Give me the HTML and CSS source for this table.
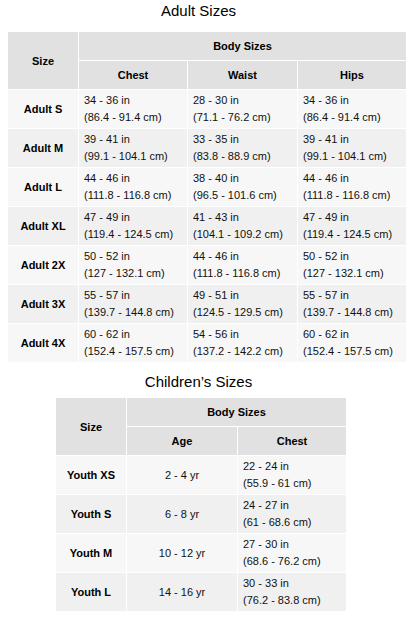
FILE: index.html
```html
<!DOCTYPE html>
<html>
<head>
<meta charset="utf-8">
<link rel="stylesheet" href="styles.css">
</head>
<body>
<div class="page">
  <h2 class="title title-adult">Adult Sizes</h2>
  <table class="sizes sizes-adult">
    <colgroup>
      <col class="c-size"><col class="c-chest"><col class="c-waist"><col class="c-hips">
    </colgroup>
    <thead>
      <tr><th rowspan="2" class="size-head">Size</th><th colspan="3" class="last">Body Sizes</th></tr>
      <tr><th>Chest</th><th>Waist</th><th class="last">Hips</th></tr>
    </thead>
    <tbody>
      <tr class="odd"><td class="size">Adult S</td><td>34 - 36 in<br>(86.4 - 91.4 cm)</td><td>28 - 30 in<br>(71.1 - 76.2 cm)</td><td class="last">34 - 36 in<br>(86.4 - 91.4 cm)</td></tr>
      <tr class="even"><td class="size">Adult M</td><td>39 - 41 in<br>(99.1 - 104.1 cm)</td><td>33 - 35 in<br>(83.8 - 88.9 cm)</td><td class="last">39 - 41 in<br>(99.1 - 104.1 cm)</td></tr>
      <tr class="odd"><td class="size">Adult L</td><td>44 - 46 in<br>(111.8 - 116.8 cm)</td><td>38 - 40 in<br>(96.5 - 101.6 cm)</td><td class="last">44 - 46 in<br>(111.8 - 116.8 cm)</td></tr>
      <tr class="even"><td class="size">Adult XL</td><td>47 - 49 in<br>(119.4 - 124.5 cm)</td><td>41 - 43 in<br>(104.1 - 109.2 cm)</td><td class="last">47 - 49 in<br>(119.4 - 124.5 cm)</td></tr>
      <tr class="odd"><td class="size">Adult 2X</td><td>50 - 52 in<br>(127 - 132.1 cm)</td><td>44 - 46 in<br>(111.8 - 116.8 cm)</td><td class="last">50 - 52 in<br>(127 - 132.1 cm)</td></tr>
      <tr class="even"><td class="size">Adult 3X</td><td>55 - 57 in<br>(139.7 - 144.8 cm)</td><td>49 - 51 in<br>(124.5 - 129.5 cm)</td><td class="last">55 - 57 in<br>(139.7 - 144.8 cm)</td></tr>
      <tr class="odd"><td class="size">Adult 4X</td><td>60 - 62 in<br>(152.4 - 157.5 cm)</td><td>54 - 56 in<br>(137.2 - 142.2 cm)</td><td class="last">60 - 62 in<br>(152.4 - 157.5 cm)</td></tr>
    </tbody>
  </table>

  <h2 class="title title-kids">Children’s Sizes</h2>
  <table class="sizes sizes-kids">
    <colgroup>
      <col class="k-size"><col class="k-age"><col class="k-chest">
    </colgroup>
    <thead>
      <tr><th rowspan="2" class="size-head">Size</th><th colspan="2" class="last">Body Sizes</th></tr>
      <tr><th>Age</th><th class="last">Chest</th></tr>
    </thead>
    <tbody>
      <tr class="odd"><td class="size">Youth XS</td><td class="center">2 - 4 yr</td><td class="last">22 - 24 in<br>(55.9 - 61 cm)</td></tr>
      <tr class="even"><td class="size">Youth S</td><td class="center">6 - 8 yr</td><td class="last">24 - 27 in<br>(61 - 68.6 cm)</td></tr>
      <tr class="odd"><td class="size">Youth M</td><td class="center">10 - 12 yr</td><td class="last">27 - 30 in<br>(68.6 - 76.2 cm)</td></tr>
      <tr class="even"><td class="size">Youth L</td><td class="center">14 - 16 yr</td><td class="last">30 - 33 in<br>(76.2 - 83.8 cm)</td></tr>
    </tbody>
  </table>
</div>
</body>
</html>
```

FILE: styles.css
```css
html, body {
  margin: 0;
  padding: 0;
  background: #ffffff;
}

body {
  padding: 0 8px;
  font-family: "Liberation Sans", Arial, sans-serif;
  color: #000;
}

.page {
  width: 397px;
}

.title {
  margin: 0;
  padding-right: 16px;
  font-size: 15px;
  line-height: 20px;
  font-weight: normal;
  text-align: center;
  color: #000;
}

.title-adult {
  padding-top: 1px;
  margin-bottom: 11px;
}

.title-kids {
  margin-top: 9px;
  margin-bottom: 6px;
}

.sizes {
  border-collapse: separate;
  border-spacing: 0;
  table-layout: fixed;
  font-size: 11px;
  line-height: 17px;
}

.sizes-adult {
  width: 398px;
}

.sizes-kids {
  width: 290px;
  margin-left: 48px;
}

.c-size { width: 71px; }
.c-chest { width: 109px; }
.c-waist { width: 110px; }
.c-hips { width: 108px; }

.k-size { width: 71px; }
.k-age { width: 111px; }
.k-chest { width: 108px; }

.sizes th,
.sizes td {
  border-right: 1px solid #ffffff;
  border-bottom: 1px solid #ffffff;
}

.sizes .last {
  border-right: none;
}

.sizes th {
  background: #e1e1e1;
  font-weight: bold;
  text-align: center;
  padding: 6px 0 5px;
  vertical-align: middle;
}

.sizes td {
  padding: 2px 0 2px 5px;
  text-align: left;
  vertical-align: middle;
  color: #111;
  white-space: nowrap;
}

.sizes td.size {
  font-weight: bold;
  text-align: center;
  padding-left: 0;
  color: #000;
}

.sizes td.center {
  text-align: center;
  padding-left: 0;
}

.odd td {
  background: #f7f7f7;
}

.even td {
  background: #f0f0f0;
}
```
